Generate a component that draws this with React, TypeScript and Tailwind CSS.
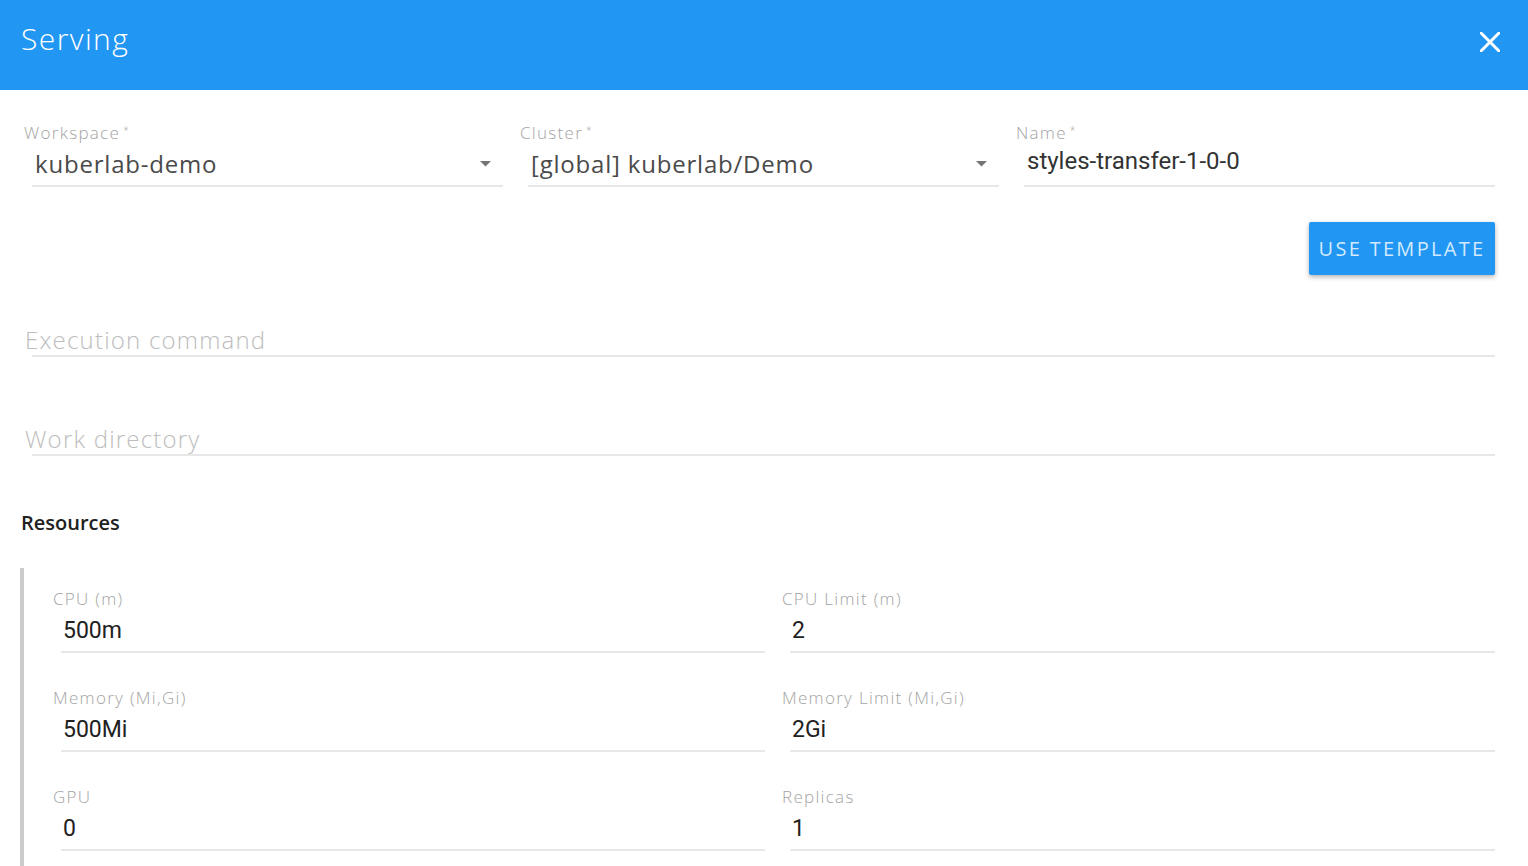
import React from "react";

const labelFont = { fontFamily: '"Open Sans", "Noto Sans", sans-serif' };
const valueFont = { fontFamily: 'Roboto, "Liberation Sans", sans-serif' };

function Label({ text, required }: { text: string; required?: boolean }) {
  return (
    <div
      className="h-[20px] leading-[20px] text-[17px] tracking-[1.3px] text-[#a3a3a3] font-light whitespace-nowrap"
      style={labelFont}
    >
      {text}
      {required && <span className="text-[10px] align-top ml-[3px] relative top-[-3px]">*</span>}
    </div>
  );
}

function Arrow() {
  return (
    <svg width="11" height="6" viewBox="0 0 11 6" className="mr-[12px]">
      <path d="M0 0 L11 0 L5.5 5.5 Z" fill="#757575" />
    </svg>
  );
}

function TopField({
  label,
  value,
  select,
  shiftUp,
}: {
  label: string;
  value: string;
  select?: boolean;
  shiftUp?: boolean;
}) {
  return (
    <div className="w-[496px] shrink-0">
      <Label text={label} required />
      <div className="ml-[8px] w-[471px] h-[44px] border-b-2 border-[#e8e8e8] flex items-center justify-between">
        <span
          className={
            "pl-[3px] text-[24px] whitespace-nowrap " +
            (shiftUp
              ? "relative top-[-3px] text-[#333333]"
              : "relative top-[0px] tracking-[0.8px] text-[#4a4a4a]")
          }
          style={select ? labelFont : valueFont}
        >
          {value}
        </span>
        {select && <Arrow />}
      </div>
    </div>
  );
}

function ResField({ label, value, w }: { label: string; value: string; w: string }) {
  return (
    <div className="w-[729px] shrink-0">
      <Label text={label} />
      <div className={"ml-[8px] h-[44px] border-b-2 border-[#e8e8e8] flex items-center " + w}>
        <span className="pl-[2px] text-[23px] text-[#212121] relative top-[1px]" style={valueFont}>
          {value}
        </span>
      </div>
    </div>
  );
}

export default function App() {
  return (
    <div className="w-[1528px] h-[866px] overflow-hidden bg-white">
      <div className="h-[90px] bg-[#2196f3] flex items-center justify-between pl-[21px] pr-[28px]">
        <span
          className="text-white text-[30px] tracking-[1.4px] font-light relative top-[-7px]"
          style={labelFont}
        >
          Serving
        </span>
        <svg width="20" height="20" viewBox="0 0 20 20" className="relative top-[-3px]">
          <path d="M1 1 L19 19 M19 1 L1 19" stroke="white" strokeWidth="3" strokeLinecap="square" />
        </svg>
      </div>

      <div className="pl-[24px] pr-[33px]">
        <div className="flex pt-[33px]">
          <TopField label="Workspace" value="kuberlab-demo" select />
          <TopField label="Cluster" value="[global] kuberlab/Demo" select />
          <TopField label="Name" value="styles-transfer-1-0-0" shiftUp />
        </div>

        <div className="flex justify-end mt-[35px]">
          <button
            className="h-[53px] w-[186px] bg-[#2196f3] text-[#d3eafd] text-[20px] tracking-[2.3px] rounded-[2px] shadow-[0_2px_5px_rgba(0,0,0,0.3)] whitespace-nowrap"
            style={labelFont}
          >
            USE TEMPLATE
          </button>
        </div>

        <div className="mt-[48px] ml-[8px] border-b-2 border-[#e8e8e8]">
          <span
            className="block -ml-[7px] leading-[32px] text-[24px] tracking-[1.2px] text-[#bdbdbd] font-light relative top-[1px]"
            style={labelFont}
          >
            Execution command
          </span>
        </div>

        <div className="mt-[65px] ml-[8px] border-b-2 border-[#e8e8e8]">
          <span
            className="block -ml-[7px] leading-[32px] text-[24px] tracking-[1.2px] text-[#bdbdbd] font-light relative top-[1px]"
            style={labelFont}
          >
            Work directory
          </span>
        </div>

        <div
          className="mt-[55px] -ml-[3px] leading-[24px] text-[20px] font-semibold text-[#212121]"
          style={labelFont}
        >
          Resources
        </div>

        <div className="mt-[33px] -ml-[4px] border-l-4 border-[#cccccc] pl-[29px] pt-[21px] pb-[40px] flex flex-col gap-[35px]">
          <div className="flex">
            <ResField label="CPU (m)" value="500m" w="w-[704px]" />
            <ResField label="CPU Limit (m)" value="2" w="w-[705px]" />
          </div>
          <div className="flex">
            <ResField label="Memory (Mi,Gi)" value="500Mi" w="w-[704px]" />
            <ResField label="Memory Limit (Mi,Gi)" value="2Gi" w="w-[705px]" />
          </div>
          <div className="flex">
            <ResField label="GPU" value="0" w="w-[704px]" />
            <ResField label="Replicas" value="1" w="w-[705px]" />
          </div>
        </div>
      </div>
    </div>
  );
}
